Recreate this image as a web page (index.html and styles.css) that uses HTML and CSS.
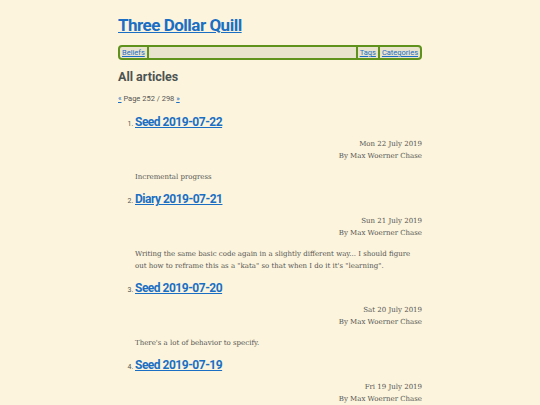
FILE: index.html
```html
<!DOCTYPE html>
<html lang="en">
<head>
    <meta charset="UTF-8">
    <meta name="viewport" content="width=device-width, initial-scale=1.0">
    <title>Three Dollar Quill</title>
    <link rel="stylesheet" href="styles.css">
</head>
<body>
    <div class="page">
        <h1 class="site-title"><a href="#">Three Dollar Quill</a></h1>

        <nav class="nav">
            <a href="#" class="nav-link nav-left">Beliefs</a>
            <span class="nav-fill"></span>
            <a href="#" class="nav-link">Tags</a>
            <a href="#" class="nav-link">Categories</a>
        </nav>

        <h2 class="section-title">All articles</h2>
        <p class="pager"><a href="#">&laquo;</a> Page 252 / 298 <a href="#">&raquo;</a></p>

        <ol class="articles">
            <li class="article">
                <h3 class="article-title"><a href="#">Seed 2019-07-22</a></h3>
                <div class="meta">
                    <div>Mon 22 July 2019</div>
                    <div>By Max Woerner Chase</div>
                </div>
                <p class="summary">Incremental progress</p>
            </li>
            <li class="article">
                <h3 class="article-title"><a href="#">Diary 2019-07-21</a></h3>
                <div class="meta">
                    <div>Sun 21 July 2019</div>
                    <div>By Max Woerner Chase</div>
                </div>
                <p class="summary">Writing the same basic code again in a slightly different way... I should figure out how to reframe this as a "kata" so that when I do it it's "learning".</p>
            </li>
            <li class="article">
                <h3 class="article-title"><a href="#">Seed 2019-07-20</a></h3>
                <div class="meta">
                    <div>Sat 20 July 2019</div>
                    <div>By Max Woerner Chase</div>
                </div>
                <p class="summary">There's a lot of behavior to specify.</p>
            </li>
            <li class="article">
                <h3 class="article-title"><a href="#">Seed 2019-07-19</a></h3>
                <div class="meta">
                    <div>Fri 19 July 2019</div>
                    <div>By Max Woerner Chase</div>
                </div>
            </li>
        </ol>
    </div>
</body>
</html>
```

FILE: styles.css
```css
body {
    margin: 0;
    background-color: #fcf4dc;
    color: #555;
    font-family: "DejaVu Serif", serif;
}
a {
    color: #1a6fc4;
}
.page {
    width: 304px;
    margin: 0 auto;
    padding-top: 14px;
}
.site-title {
    margin: 0;
    font-family: Roboto, sans-serif;
    font-size: 17px;
    line-height: 22px;
    font-weight: 700;
    letter-spacing: -0.5px;
}
.nav {
    display: flex;
    margin-top: 9px;
    height: 11px;
    border: 2px solid #5e921c;
    border-radius: 4px;
    background-color: #e9e3cd;
    font-family: Roboto, sans-serif;
    font-size: 7.5px;
    line-height: 11px;
}
.nav-link {
    padding: 0 2px;
    border-left: 2px solid #5e921c;
}
.nav-left {
    border-left: none;
    border-right: 2px solid #5e921c;
}
.nav-fill {
    flex: 1;
}
.section-title {
    margin: 9px 0 0;
    font-family: Roboto, sans-serif;
    font-size: 12.5px;
    line-height: 16px;
    color: #4b5353;
}
.pager {
    margin: 9px 0 0;
    font-family: Roboto, sans-serif;
    font-size: 7.5px;
    line-height: 10px;
}
.articles {
    margin: 10px 0 0;
    padding-left: 17px;
}
.article::marker {
    font-family: Roboto, sans-serif;
    font-size: 7px;
    color: #555;
}
.article-title {
    margin: 0;
    font-family: Roboto, sans-serif;
    font-size: 12px;
    line-height: 16px;
    letter-spacing: -0.5px;
}
.meta {
    margin-top: 8px;
    text-align: right;
    font-size: 7px;
    line-height: 12px;
}
.summary {
    margin: 9px 0 0;
    font-size: 7px;
    line-height: 12px;
    padding-bottom: 8px;
}
```
